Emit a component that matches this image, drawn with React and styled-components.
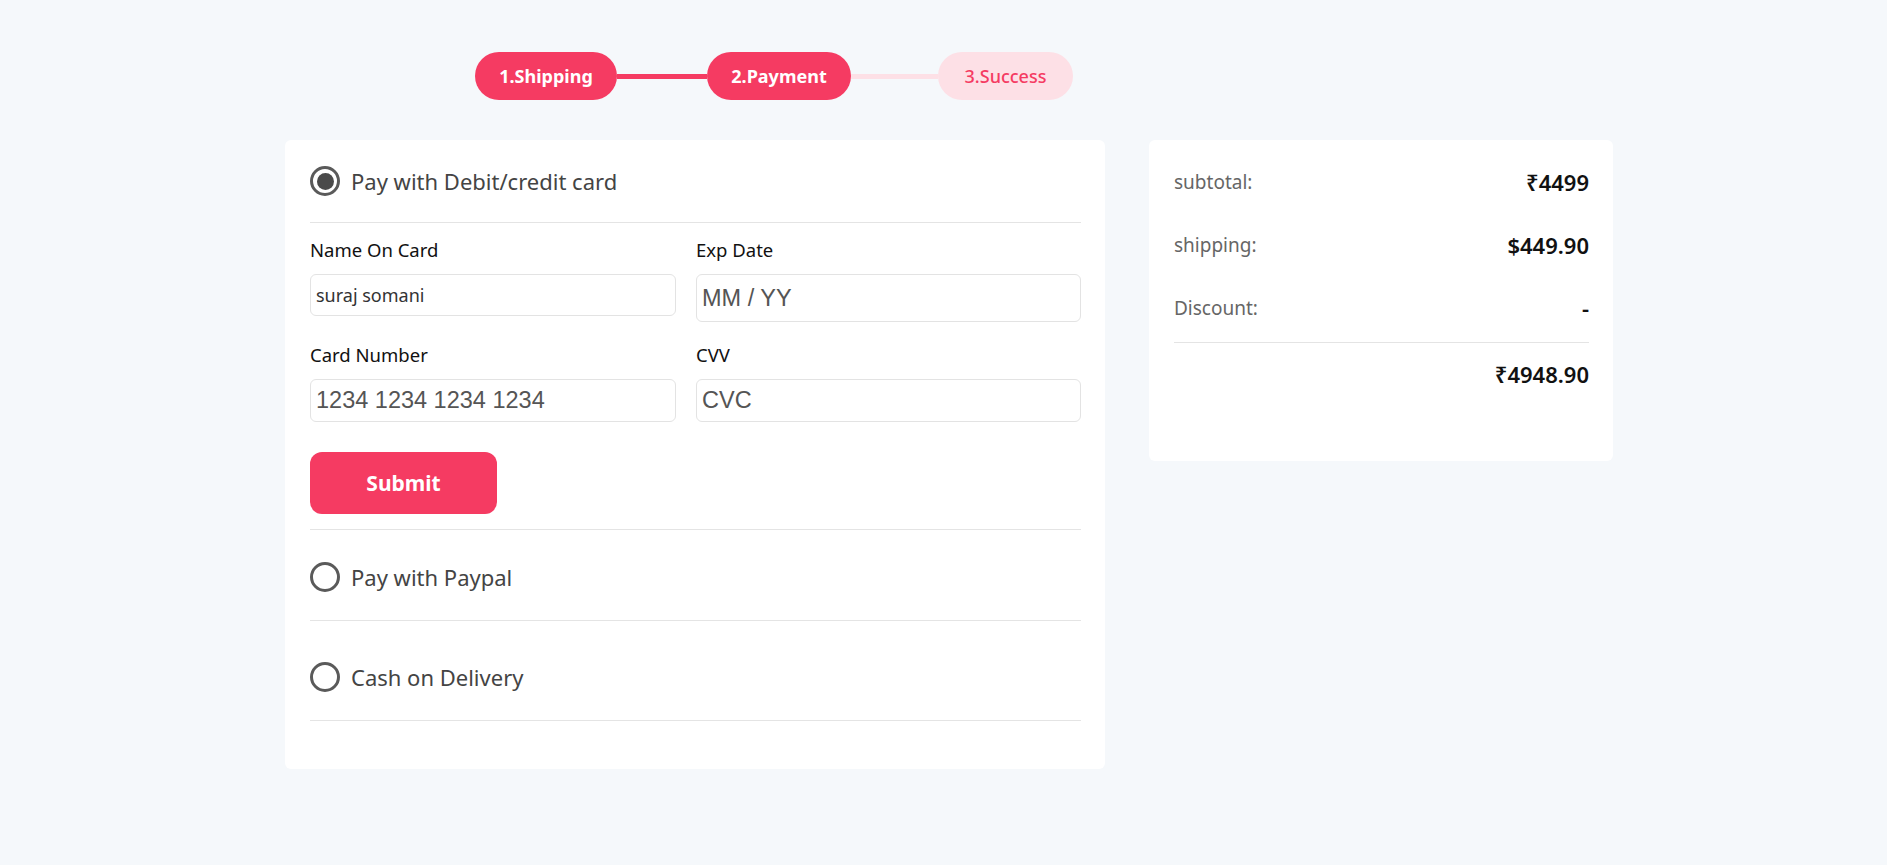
import React from 'react';
import styled, { createGlobalStyle } from 'styled-components';

const GlobalStyle = createGlobalStyle`
    body {
        margin: 0;
        background: #f5f8fb;
        font-family: "Noto Sans", "Open Sans", sans-serif;
    }
`;

const Page = styled.div`
    min-height: 865px;
    padding-top: 52px;
    box-sizing: border-box;
`;

const Stepper = styled.div`
    display: flex;
    align-items: center;
    padding-left: 475px;
`;

const Step = styled.div`
    width: ${p => p.w}px;
    height: 48px;
    border-radius: 24px;
    display: flex;
    align-items: center;
    justify-content: center;
    font-size: 18px;
    background: ${p => (p.done ? '#f53b62' : '#fde0e6')};
    color: ${p => (p.done ? '#fff' : '#f53b62')};
    font-weight: ${p => (p.done ? 700 : 500)};
`;

const StepLine = styled.div`
    width: ${p => p.w}px;
    height: 5px;
    background: ${p => (p.done ? '#f53b62' : '#fde0e6')};
`;

const Wrapper = styled.div`
    display: flex;
    align-items: flex-start;
    gap: 44px;
    margin-top: 40px;
    padding-left: 285px;
`;

const Card = styled.div`
    background: #fff;
    border-radius: 6px;
    box-sizing: border-box;
    width: ${p => p.w}px;
    padding: 0 24px 0 25px;
`;

const PayCard = styled(Card)`
    padding-bottom: 48px;
`;

const Option = styled.div`
    display: flex;
    align-items: center;
    gap: 11px;
    height: 30px;
    padding-top: ${p => p.top}px;
    padding-bottom: ${p => p.bottom}px;
    border-bottom: 1px solid #e4e4e4;
`;

const Radio = styled.span`
    width: 30px;
    height: 30px;
    flex-shrink: 0;
    box-sizing: border-box;
    border: 3px solid #5a5a5a;
    border-radius: 50%;
    display: flex;
    align-items: center;
    justify-content: center;

    &::after {
        content: '';
        width: 17px;
        height: 17px;
        border-radius: 50%;
        background: #4a4a4a;
        display: ${p => (p.checked ? 'block' : 'none')};
    }
`;

const OptionText = styled.span`
    font-size: 22px;
    line-height: 30px;
    color: #444;
`;

const Form = styled.div`
    padding-top: 15px;
    padding-bottom: 15px;
    border-bottom: 1px solid #e4e4e4;
`;

const Grid = styled.div`
    display: grid;
    grid-template-columns: 366px 385px;
    column-gap: 20px;
    row-gap: 21px;
    align-items: start;
`;

const Field = styled.div`
    display: flex;
    flex-direction: column;
    gap: 12px;
`;

const Label = styled.label`
    font-size: 18.5px;
    line-height: 24px;
    color: #111;
`;

const Input = styled.input`
    height: ${p => p.h}px;
    box-sizing: border-box;
    border: 1px solid #e3e3e3;
    border-radius: 6px;
    padding: 0 5px;
    font-family: ${p => (p.stripe ? '"Liberation Sans", Arial, sans-serif' : '"Noto Sans", sans-serif')};
    font-size: ${p => (p.stripe ? 23.5 : 18)}px;
    color: #333;
    outline: none;

    &::placeholder {
        color: #555;
    }
`;

const Submit = styled.button`
    margin-top: 30px;
    width: 187px;
    height: 62px;
    border: none;
    border-radius: 12px;
    background: #f53b62;
    color: #fff;
    font-family: "Noto Sans", sans-serif;
    font-size: 21px;
    font-weight: 700;
    cursor: pointer;
`;

const SummaryCard = styled(Card)`
    padding-top: 28px;
    padding-bottom: 73px;
`;

const Row = styled.div`
    display: flex;
    justify-content: space-between;
    align-items: center;
    height: 28px;
    margin-bottom: ${p => p.mb}px;
`;

const RowLabel = styled.span`
    font-size: 19px;
    color: #666;
`;

const RowValue = styled.span`
    font-size: 22px;
    font-weight: 600;
    color: #111;
`;

const Divider = styled.div`
    height: 1px;
    background: #e4e4e4;
    margin-bottom: 17px;
`;

const App = () => {
    return (
        <Page>
            <GlobalStyle />
            <Stepper>
                <Step done w={142}>1.Shipping</Step>
                <StepLine done w={90} />
                <Step done w={144}>2.Payment</Step>
                <StepLine w={87} />
                <Step w={135}>3.Success</Step>
            </Stepper>

            <Wrapper>
                <PayCard w={820}>
                    <Option top={26} bottom={26}>
                        <Radio checked />
                        <OptionText>Pay with Debit/credit card</OptionText>
                    </Option>

                    <Form>
                        <Grid>
                            <Field>
                                <Label>Name On Card</Label>
                                <Input h={42} defaultValue="suraj somani" />
                            </Field>
                            <Field>
                                <Label>Exp Date</Label>
                                <Input h={48} stripe placeholder="MM / YY" />
                            </Field>
                            <Field>
                                <Label>Card Number</Label>
                                <Input h={43} stripe placeholder="1234 1234 1234 1234" />
                            </Field>
                            <Field>
                                <Label>CVV</Label>
                                <Input h={43} stripe placeholder="CVC" />
                            </Field>
                        </Grid>
                        <Submit>Submit</Submit>
                    </Form>

                    <Option top={32} bottom={28}>
                        <Radio />
                        <OptionText>Pay with Paypal</OptionText>
                    </Option>

                    <Option top={41} bottom={28}>
                        <Radio />
                        <OptionText>Cash on Delivery</OptionText>
                    </Option>
                </PayCard>

                <SummaryCard w={464}>
                    <Row mb={35}>
                        <RowLabel>subtotal:</RowLabel>
                        <RowValue>₹4499</RowValue>
                    </Row>
                    <Row mb={35}>
                        <RowLabel>shipping:</RowLabel>
                        <RowValue>$449.90</RowValue>
                    </Row>
                    <Row mb={20}>
                        <RowLabel>Discount:</RowLabel>
                        <RowValue>-</RowValue>
                    </Row>
                    <Divider />
                    <Row mb={0}>
                        <span />
                        <RowValue>₹4948.90</RowValue>
                    </Row>
                </SummaryCard>
            </Wrapper>
        </Page>
    );
};

export default App;
